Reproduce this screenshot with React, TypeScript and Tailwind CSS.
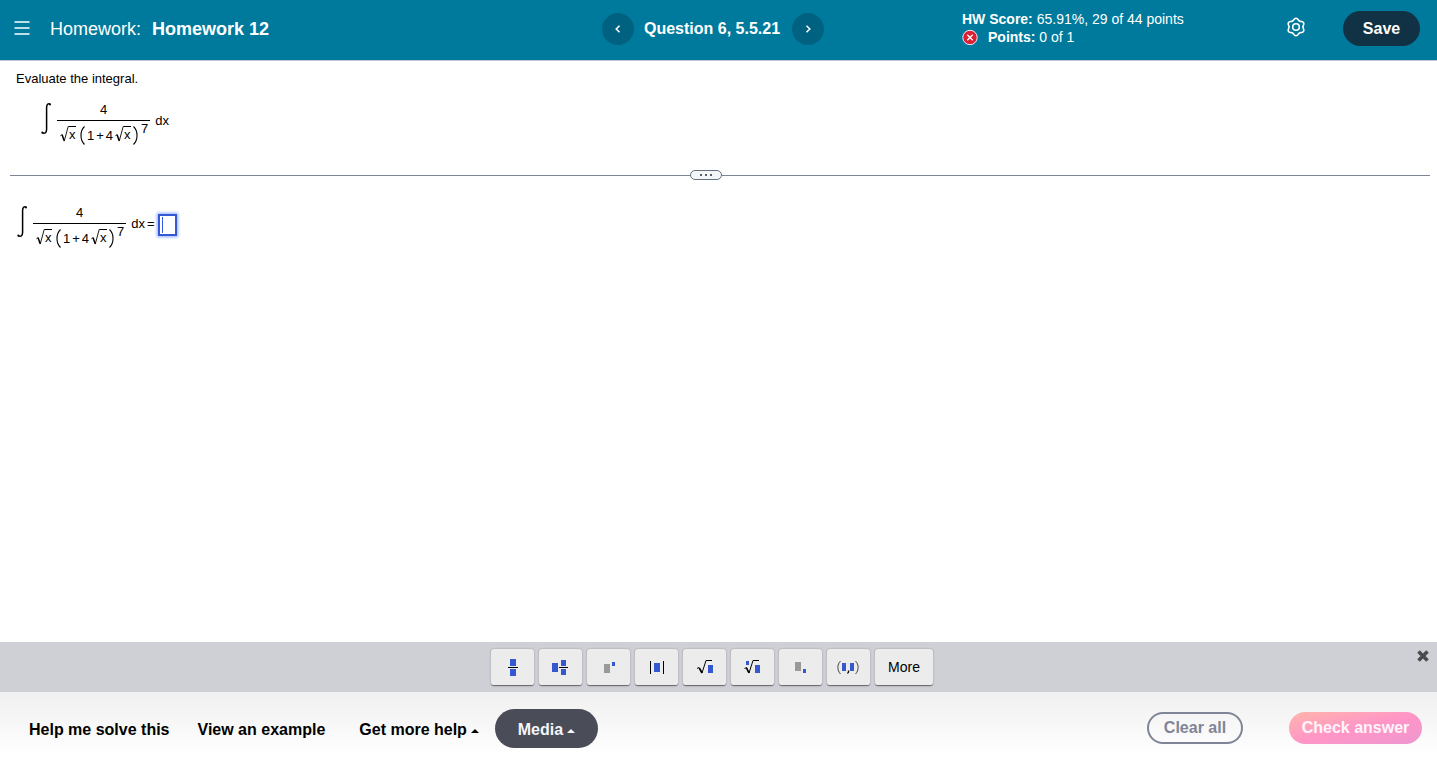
import { useState, type ReactNode } from "react"

const keyClass =
  "flex h-[37px] items-center justify-center rounded-[3px] border-b border-[#6b6b70] bg-[#ececec] shadow-[0_0_2px_rgba(0,0,0,0.3)] hover:bg-white"

// Six rounded teeth around a 20x20 box
const gearPath =
  Array.from({ length: 72 }, (_, i) => {
    const a = (i * Math.PI) / 36
    const r = 7.8 + 0.9 * Math.cos(6 * a)
    const x = (10 + r * Math.sin(a)).toFixed(2)
    const y = (10 - r * Math.cos(a)).toFixed(2)
    return `${i ? "L" : "M"}${x} ${y}`
  }).join("") + "z"

function Radical() {
  return (
    <span className="flex h-4">
      <svg className="h-4 w-[9px]" viewBox="0 0 9 16" fill="none" stroke="#000" aria-hidden="true">
        <path d="M0.3 9.8 2 8.7" strokeWidth="0.8" />
        <path d="M2 8.6 4.2 14.8" strokeWidth="1.5" />
        <path d="M4.2 15.2 8.2 0.5H9" strokeWidth="0.9" />
      </svg>
      <span className="w-[7px] border-t border-black leading-4">x</span>
    </span>
  )
}

function Paren({ close }: { close?: boolean }) {
  return (
    <svg className="h-[19px] w-[5px]" viewBox="0 0 5 19" aria-hidden="true">
      <path
        d={close ? "M0.5 0.5C5.2 5 5.2 14 0.5 18.5" : "M4.5 0.5C-0.2 5 -0.2 14 4.5 18.5"}
        fill="none"
        stroke="#000"
        strokeWidth="1.1"
      />
    </svg>
  )
}

function Integral({ children }: { children?: ReactNode }) {
  return (
    <div className="flex items-start text-[13px] leading-4">
      <svg className="mr-[6px] h-[33px] w-[10px]" viewBox="0 0 10 33" fill="none" aria-hidden="true">
        <path
          d="M9.4 1.2C7.4 0.2 5.6 1 5.6 4.500V26.500C5.600 30 3.600 30.800 1 29.800"
          stroke="#000"
          strokeWidth="1.5"
        />
        <circle cx="9" cy="1.6" r="1" fill="#000" />
        <circle cx="1.3" cy="29.6" r="1" fill="#000" />
      </svg>
      <div className="flex flex-col">
        <span className="h-[18px] border-b border-black text-center leading-[13px]">4</span>
        <span className="flex h-[25px] items-end gap-[2px] pr-[2px] pl-[3px]">
          <span className="mr-[2px] flex h-5 items-start">
            <Radical />
          </span>
          <span className="flex h-5 items-start">
            <Paren />
          </span>
          <span className="flex h-5 items-start gap-[2px]">
            <span className="leading-5">1</span>
            <span className="leading-5">+</span>
            <span className="leading-5">4</span>
            <Radical />
          </span>
          <span className="flex h-5 items-start">
            <Paren close />
          </span>
          <span className="self-start pl-px leading-4">7</span>
        </span>
      </div>
      <span className="mt-[10px] ml-[5px] flex gap-[2px]">
        <span>dx</span>
        {children && <span>=</span>}
      </span>
      {children}
    </div>
  )
}

const keys = [
  {
    label: "Fraction",
    icon: (
      <>
        <path d="M12 2h6v7h-6zM12 12h6v7h-6z" fill="#3557d0" />
        <path d="M10 10.5h10" stroke="#000" />
      </>
    ),
  },
  {
    label: "Mixed number",
    icon: (
      <>
        <path d="M6 6h6v9H6zM15 3h5v6h-5zM15 12h5v6h-5z" fill="#3557d0" />
        <path d="M13 10.5h9" stroke="#000" />
      </>
    ),
  },
  {
    label: "Exponent",
    icon: (
      <>
        <path d="M10 7h6v9h-6z" fill="#999" />
        <path d="M18 5h3v4h-3z" fill="#3557d0" />
      </>
    ),
  },
  {
    label: "Absolute value",
    icon: (
      <>
        <path d="M12 6h6v9h-6z" fill="#3557d0" />
        <path d="M8.5 4v13M21.5 4v13" stroke="#000" />
      </>
    ),
  },
  {
    label: "Square root",
    icon: (
      <>
        <path d="M18 8h5v8h-5z" fill="#3557d0" />
        <path d="M7 11.5 9 10.5 12 16 16 3.5H22" fill="none" stroke="#000" />
        <path d="M9.3 11 12 16" stroke="#000" strokeWidth="1.6" />
      </>
    ),
  },
  {
    label: "Nth root",
    icon: (
      <>
        <path d="M17 8h5v8h-5zM8 4h3v4H8z" fill="#3557d0" />
        <path d="M6.5 11.5 8.5 10.5 11 16 15 3.5H21" fill="none" stroke="#000" />
        <path d="M8.5 11 11 16" stroke="#000" strokeWidth="1.6" />
      </>
    ),
  },
  {
    label: "Subscript",
    icon: (
      <>
        <path d="M9 5h6v9H9z" fill="#999" />
        <path d="M17 12h3v4h-3z" fill="#3557d0" />
      </>
    ),
  },
  {
    label: "Ordered pair",
    icon: (
      <>
        <path d="M8 6h4v8H8zM16 6h4v8h-4z" fill="#3557d0" />
        <path d="M6.5 4C3 7.5 3 13.5 6.5 17M21.5 4C25 7.5 25 13.5 21.5 17" fill="none" stroke="#444" />
        <path d="M14.5 13.5V15L13.5 16.5" fill="none" stroke="#000" strokeWidth="1.3" />
      </>
    ),
  },
]

function Caret() {
  return (
    <svg className="mt-[2px] h-1 w-2" viewBox="0 0 8 4" fill="currentColor" aria-hidden="true">
      <path d="M0 4 4 0 8 4z" />
    </svg>
  )
}

function Header() {
  return (
    <header className="grid h-[61px] grid-cols-[1fr_222px_1fr] items-start border-b border-[#c3c8d6] bg-[#007a9c] pr-[11px] text-white">
      <div className="flex h-[58px] items-center pl-[14px]">
        <button type="button" aria-label="Menu" className="mr-5 flex">
          <svg className="h-4 w-4" viewBox="0 0 16 16" stroke="currentColor" strokeWidth="1.6" aria-hidden="true">
            <path d="M0.5 1h15M0.5 7h15M0.5 13h15" />
          </svg>
        </button>
        <h1 className="flex gap-[11px] text-[18px]">
          <span>Homework:</span>
          <strong>Homework 12</strong>
        </h1>
      </div>

      <nav className="flex h-[57px] items-center justify-between" aria-label="Questions">
        <button
          type="button"
          aria-label="Previous question"
          className="flex size-8 items-center justify-center rounded-full bg-[#006280]"
        >
          <svg className="size-2" viewBox="0 0 8 8" fill="none" stroke="currentColor" strokeWidth="1.5" aria-hidden="true">
            <path d="M5.5 0.8 2.2 4 5.5 7.2" />
          </svg>
        </button>
        <span className="pr-[2px] text-base font-bold">Question 6, 5.5.21</span>
        <button
          type="button"
          aria-label="Next question"
          className="flex size-8 items-center justify-center rounded-full bg-[#006280]"
        >
          <svg className="size-2" viewBox="0 0 8 8" fill="none" stroke="currentColor" strokeWidth="1.5" aria-hidden="true">
            <path d="M2.5 0.8 5.8 4 2.5 7.2" />
          </svg>
        </button>
      </nav>

      <div className="flex h-[57px] items-center pr-[6px] pl-[138px]">
        <div className="pb-[2px] text-sm leading-[18px]">
          <p>
            <strong>HW Score:</strong> 65.91%, 29 of 44 points
          </p>
          <p className="flex items-center">
            <svg className="mr-[10px] size-4" viewBox="0 0 16 16" aria-hidden="true">
              <circle cx="8" cy="8.5" r="7.2" fill="#db1f35" stroke="#fff" strokeWidth="0.9" />
              <path d="M5.3 5.8 10.7 11.2M10.7 5.8 5.3 11.2" stroke="#fff" strokeWidth="1.3" />
            </svg>
            <span>
              <strong>Points:</strong> 0 of 1
            </span>
          </p>
        </div>
        <button type="button" aria-label="Settings" className="mr-[37px] ml-auto flex pb-[3px]">
          <svg className="size-5" viewBox="0 0 20 20" fill="none" stroke="currentColor" strokeWidth="1.6" aria-hidden="true">
            <path d={gearPath} />
            <circle cx="10" cy="10" r="3.3" />
          </svg>
        </button>
        <button type="button" className="h-[35px] w-[77px] rounded-full bg-[#113244] text-base font-bold">
          Save
        </button>
      </div>
    </header>
  )
}

export default function App() {
  const [answer, setAnswer] = useState("")
  const [showPalette, setShowPalette] = useState(true)

  return (
    <div className="flex min-h-screen flex-col bg-white font-['Liberation_Sans',Arial,sans-serif] text-black">
      <Header />

      <main className="flex-1">
        <div className="px-4 pt-[10px]">
          <p className="text-[13px] leading-4">Evaluate the integral.</p>
          <div className="mt-4 pl-[25px]">
            <Integral />
          </div>
        </div>

        {/* Divider with the resize handle */}
        <div className="mt-6 mr-[7px] ml-[10px] flex items-center">
          <div className="h-px flex-[24] bg-[#7b8794]" />
          <button
            type="button"
            aria-label="Resize question"
            className="flex h-[10px] w-8 items-center justify-center gap-[3px] rounded-[5px] border border-[#63727e] bg-[#f3f6f8]"
          >
            <span className="size-[2px] bg-[#56616b]" />
            <span className="size-[2px] bg-[#56616b]" />
            <span className="size-[2px] bg-[#56616b]" />
          </button>
          <div className="h-px flex-[25] bg-[#7b8794]" />
        </div>

        <div className="mt-[26px] pl-[17px]">
          <Integral>
            <label className="mt-2 ml-[3px] flex h-[22px] w-[19px] items-center border-2 border-[#3558d4] bg-white pl-[2px] shadow-[0_0_3px_1px_#8fabff]">
              <span className="h-4 w-px shrink-0 bg-[#3555e8]" />
              <input
                aria-label="Answer"
                value={answer}
                onChange={(e) => setAnswer(e.target.value)}
                className="w-full min-w-0 bg-transparent outline-none"
              />
            </label>
          </Integral>
        </div>
      </main>

      {showPalette && (
        <div className="relative flex h-[50px] justify-center gap-[5px] bg-[#cfcfd6] pt-[7px] pr-[13px]" role="toolbar" aria-label="Math symbols">
          {keys.map((key) => (
            <button key={key.label} type="button" aria-label={key.label} className={`${keyClass} w-[43px]`}>
              <svg className="h-[21px] w-[29px]" viewBox="0 0 29 21" aria-hidden="true">
                {key.icon}
              </svg>
            </button>
          ))}
          <button type="button" className={`${keyClass} w-[58px] text-sm`}>
            More
          </button>
          <button
            type="button"
            aria-label="Close palette"
            onClick={() => setShowPalette(false)}
            className="absolute top-2 right-2 flex text-[#4b4b4b]"
          >
            <svg className="size-3" viewBox="0 0 12 12" stroke="currentColor" strokeWidth="3.6" aria-hidden="true">
              <path d="M1.5 1.5 10.5 10.5M10.5 1.5 1.5 10.5" />
            </svg>
          </button>
        </div>
      )}

      <footer className="flex h-[76px] items-center bg-linear-to-b from-[#f0f0f0] to-white to-85% pr-[15px] pb-1 pl-[29px] text-base font-bold">
        <button type="button" className="mr-7 pt-[3px]">
          Help me solve this
        </button>
        <button type="button" className="mr-[34px] pt-[3px]">
          View an example
        </button>
        <button type="button" className="mr-4 flex items-center gap-1 pt-[3px]">
          Get more help
          <Caret />
        </button>
        <button
          type="button"
          className="flex h-[39px] w-[103px] items-center justify-center gap-1 rounded-full bg-[#4a4d58] pt-[3px] text-[#f5f5fa]"
        >
          Media
          <Caret />
        </button>
        <button
          type="button"
          className="mr-[46px] ml-auto h-8 w-24 rounded-full border-2 border-[#7f8596] text-[#7f8596]"
        >
          Clear all
        </button>
        <button
          type="button"
          className="h-8 w-[133px] rounded-full bg-linear-to-br from-[#ffb5ab] via-[#ff96c6] to-[#ee96d0] text-[#fff5fa]"
        >
          Check answer
        </button>
      </footer>
    </div>
  )
}
